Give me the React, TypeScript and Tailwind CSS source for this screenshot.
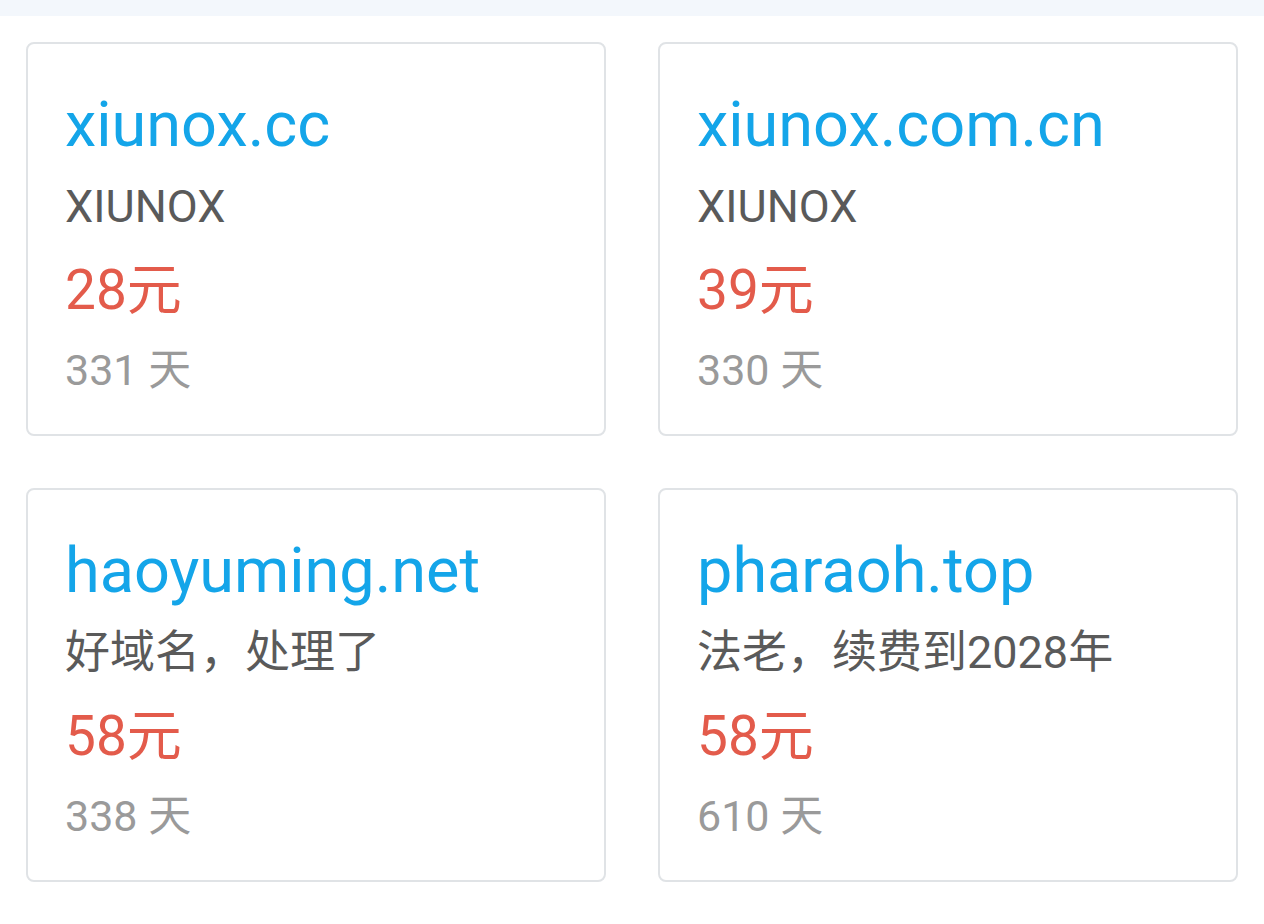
const domains = [
  { name: "xiunox.cc", note: "XIUNOX", price: "28元", days: "331 天" },
  { name: "xiunox.com.cn", note: "XIUNOX", price: "39元", days: "330 天" },
  { name: "haoyuming.net", note: "好域名，处理了", price: "58元", days: "338 天" },
  { name: "pharaoh.top", note: "法老，续费到2028年", price: "58元", days: "610 天" },
];

export default function App() {
  return (
    <div
      className="min-h-screen bg-white"
      style={{ fontFamily: 'Roboto, "Noto Sans CJK SC", sans-serif' }}
    >
      <div className="h-4 bg-[#f3f7fc]" />
      <main className="grid grid-cols-2 gap-[52px] px-[26px] pt-[26px]">
        {domains.map((d) => (
          <div
            key={d.name}
            className="h-[394px] rounded-lg border-2 border-[#e0e3e6] px-[37px] pt-[40px]"
          >
            <div className="text-[63px] leading-[82px] text-[#14a5e9]">{d.name}</div>
            <div className="text-[45px] leading-[82px] text-[#5a5a5a]">{d.note}</div>
            <div className="text-[55px] leading-[84px] text-[#e35b4b]">{d.price}</div>
            <div className="text-[43px] leading-[76px] text-[#9a9a9a]">{d.days}</div>
          </div>
        ))}
      </main>
    </div>
  );
}
